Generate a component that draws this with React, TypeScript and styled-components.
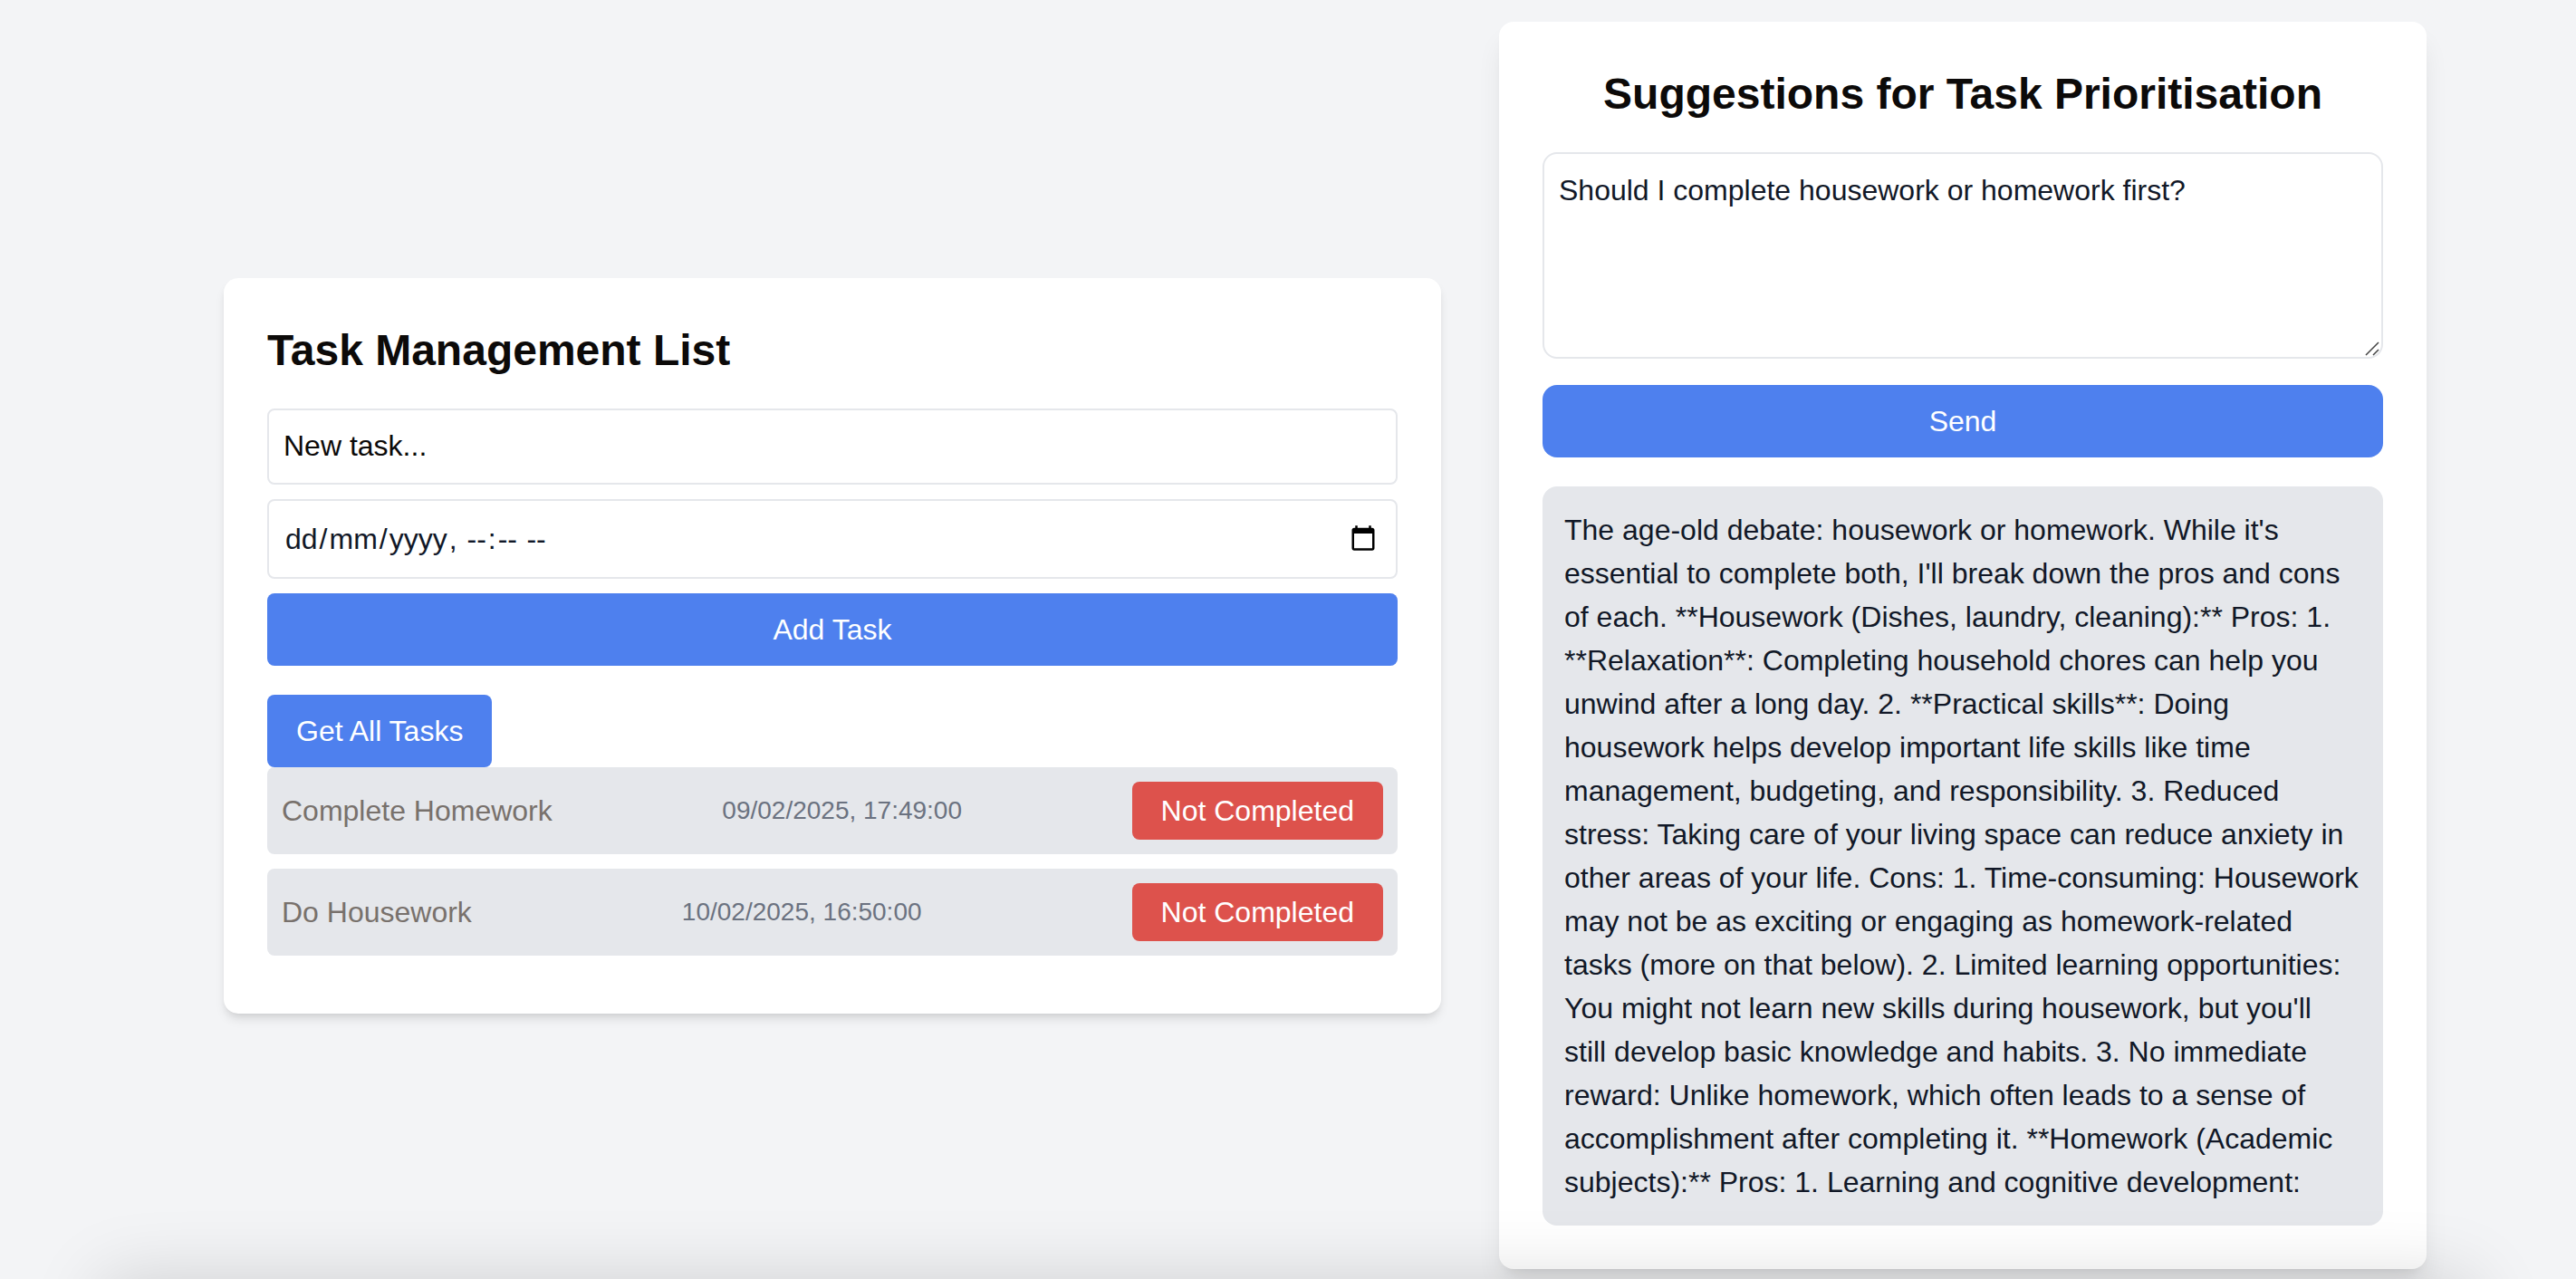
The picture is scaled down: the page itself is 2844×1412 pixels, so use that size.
import React, { useState } from "react";
import styled, { createGlobalStyle, css } from "styled-components";

const GlobalStyle = createGlobalStyle`
  *, *::before, *::after { box-sizing: border-box; }
  html { scrollbar-width: none; }
  body {
    margin: 0;
    background: #f3f4f6;
    color: #0c0a09;
    font-family: "Liberation Sans", Arial, Helvetica, sans-serif;
    font-size: 32px;
    line-height: 48px;
  }
  h1, h2, p, ul { margin: 0; padding: 0; }
  button, input, textarea { font: inherit; margin: 0; }
`;

const Page = styled.main`
  display: flex;
  align-items: center;
  justify-content: center;
  gap: 64px;
  min-height: 100vh;
  padding: 24px 24px 24px 106px;
`;

const Card = styled.section<{ $maxWidth: number; $raised?: boolean }>`
  flex: 1 1 ${(p) => p.$maxWidth}px;
  max-width: ${(p) => p.$maxWidth}px;
  min-width: 0;
  padding: 48px;
  background: #ffffff;
  border-radius: 16px;
  box-shadow: ${(p) =>
    p.$raised
      ? "0 20px 30px -6px rgba(0, 0, 0, 0.1), 0 8px 12px -8px rgba(0, 0, 0, 0.1)"
      : "0 8px 12px -2px rgba(0, 0, 0, 0.1), 0 4px 8px -4px rgba(0, 0, 0, 0.1)"};
`;

const Title = styled.h2<{ $centered?: boolean }>`
  margin-bottom: 32px;
  font-size: 48px;
  line-height: 64px;
  font-weight: 700;
  text-align: ${(p) => (p.$centered ? "center" : "left")};
`;

const TaskForm = styled.form`
  display: flex;
  flex-direction: column;
  gap: 16px;
  margin-bottom: 32px;
`;

const field = css`
  display: block;
  width: 100%;
  padding: 16px;
  border: 2px solid #e5e7eb;
  background: #ffffff;
  color: #111827;
  outline: none;
`;

const TextField = styled.input`
  ${field}
  height: 84px;
  border-radius: 8px;

  &::placeholder {
    color: #0c0a09;
    opacity: 1;
  }
`;

/* Day-first order: the named parts take fixed columns and the separators fill the cells between. */
const DateTimeField = styled.input`
  ${field}
  height: 88px;
  border-radius: 8px;

  &::-webkit-datetime-edit { padding: 0; }
  &::-webkit-datetime-edit-fields-wrapper {
    display: inline-grid;
    grid-auto-flow: column;
    align-items: center;
    padding: 2px 0;
  }
  &::-webkit-datetime-edit-day-field { grid-area: 1 / 1; padding: 0 2px; }
  &::-webkit-datetime-edit-month-field { grid-area: 1 / 3; padding: 0 2px; }
  &::-webkit-datetime-edit-year-field { grid-area: 1 / 5; padding: 0 2px; }
  &::-webkit-datetime-edit-hour-field { grid-area: 1 / 7; padding: 0 2px; }
  &::-webkit-datetime-edit-minute-field { grid-area: 1 / 9; padding: 0 2px; }
  &::-webkit-datetime-edit-ampm-field { grid-area: 1 / 11; padding: 0 2px; }
  &::-webkit-datetime-edit-text { grid-row: 1; }
  &::-webkit-calendar-picker-indicator {
    box-sizing: content-box;
    width: 32px;
    height: 32px;
    padding: 4px;
  }
`;

const Button = styled.button<{ $rounded?: boolean; $full?: boolean }>`
  display: block;
  width: ${(p) => (p.$full ? "100%" : "auto")};
  padding: 16px 32px;
  border: 0;
  border-radius: ${(p) => (p.$rounded ? "16px" : "8px")};
  background: #4e80ee;
  color: #ffffff;
  cursor: pointer;
`;

const StatusButton = styled(Button)`
  padding: 8px 32px;
  background: #dd524c;
`;

const TaskList = styled.ul`
  list-style: none;
`;

const TaskRow = styled.li`
  display: flex;
  align-items: center;
  justify-content: space-between;
  margin-bottom: 16px;
  padding: 16px;
  border-radius: 8px;
  background: #e5e7eb;
`;

const TaskName = styled.span`
  color: #78716c;
`;

const TaskDate = styled.time`
  color: #6b7280;
  font-size: 28px;
  line-height: 40px;
`;

const PromptBox = styled.div`
  position: relative;
  margin-bottom: 29px;
`;

const Prompt = styled.textarea`
  ${field}
  border-radius: 16px;
  resize: none;
`;

const Grip = styled.svg`
  position: absolute;
  right: 2px;
  bottom: 2px;
  width: 18px;
  height: 18px;
  pointer-events: none;
`;

const Answer = styled.p`
  margin-top: 32px;
  padding: 24px;
  border-radius: 16px;
  background: #e5e7eb;
  color: #111827;
`;

/* Soft glow that rises from the bottom edge of the window. */
const BottomShade = styled.div`
  position: fixed;
  top: 100%;
  left: 112px;
  right: 112px;
  height: 200px;
  border-radius: 16px;
  box-shadow: 0 0 80px rgba(0, 0, 0, 0.15);
  pointer-events: none;
`;

const tasks = [
  { name: "Complete Homework", due: "09/02/2025, 17:49:00", iso: "2025-02-09T17:49:00" },
  { name: "Do Housework", due: "10/02/2025, 16:50:00", iso: "2025-02-10T16:50:00" },
];

const answer =
  "The age-old debate: housework or homework. While it's essential to complete both, I'll break down the pros and cons of each. **Housework (Dishes, laundry, cleaning):** Pros: 1. **Relaxation**: Completing household chores can help you unwind after a long day. 2. **Practical skills**: Doing housework helps develop important life skills like time management, budgeting, and responsibility. 3. Reduced stress: Taking care of your living space can reduce anxiety in other areas of your life. Cons: 1. Time-consuming: Housework may not be as exciting or engaging as homework-related tasks (more on that below). 2. Limited learning opportunities: You might not learn new skills during housework, but you'll still develop basic knowledge and habits. 3. No immediate reward: Unlike homework, which often leads to a sense of accomplishment after completing it. **Homework (Academic subjects):** Pros: 1. Learning and cognitive development:";

export default function App() {
  const [question, setQuestion] = useState("Should I complete housework or homework first?");

  return (
    <>
      <GlobalStyle />
      <Page>
        <Card $maxWidth={1344}>
          <Title>Task Management List</Title>
          <TaskForm onSubmit={(e) => e.preventDefault()}>
            <TextField type="text" placeholder="New task..." aria-label="New task" />
            <DateTimeField type="datetime-local" aria-label="Due date" />
            <Button type="submit" $full>Add Task</Button>
          </TaskForm>
          <Button type="button">Get All Tasks</Button>
          <TaskList>
            {tasks.map((t) => (
              <TaskRow key={t.iso}>
                <TaskName>{t.name}</TaskName>
                <TaskDate dateTime={t.iso}>{t.due}</TaskDate>
                <StatusButton type="button">Not Completed</StatusButton>
              </TaskRow>
            ))}
          </TaskList>
        </Card>

        <Card $maxWidth={1024} $raised>
          <Title $centered>Suggestions for Task Prioritisation</Title>
          <PromptBox>
            <Prompt
              rows={4}
              aria-label="Your question"
              value={question}
              onChange={(e) => setQuestion(e.target.value)}
            />
            <Grip viewBox="0 0 18 18" aria-hidden="true">
              <path d="M1 16 15 2M9 16 15 10" stroke="#444" strokeWidth="1.5" fill="none" />
            </Grip>
          </PromptBox>
          <Button type="button" $full $rounded>Send</Button>
          <Answer>{answer}</Answer>
        </Card>
      </Page>
      <BottomShade />
    </>
  );
}
